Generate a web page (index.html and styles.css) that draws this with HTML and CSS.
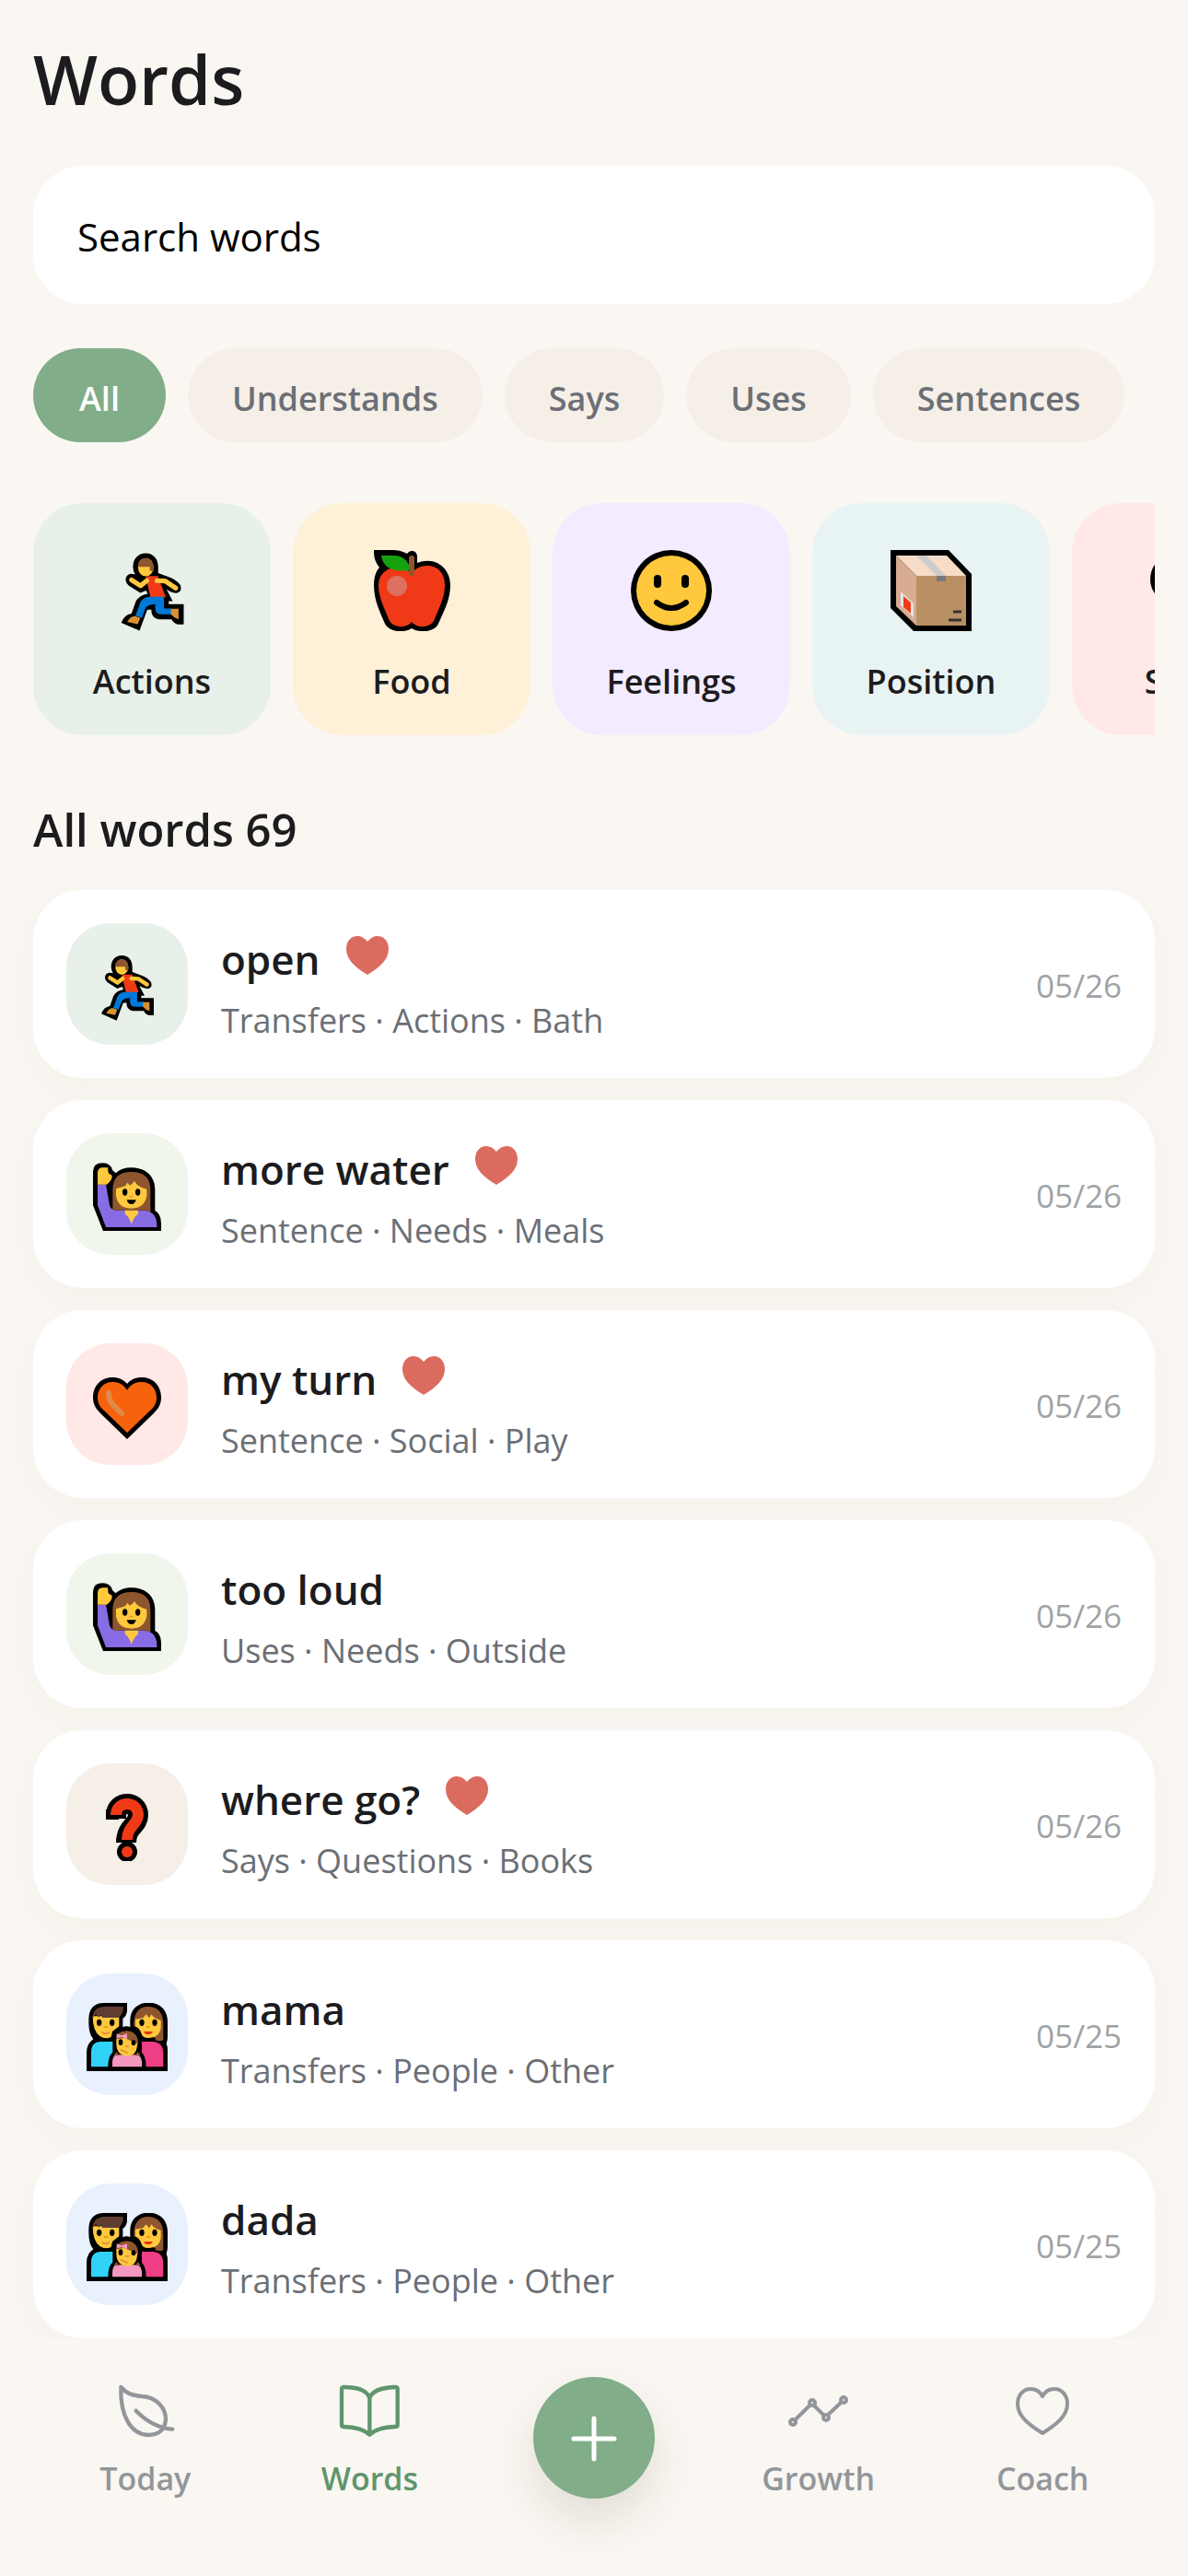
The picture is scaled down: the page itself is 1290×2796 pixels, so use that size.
FILE: index.html
```html
<!DOCTYPE html>
<html lang="en">
<head>
	<meta charset="utf-8">
	<meta name="viewport" content="width=device-width, initial-scale=1">
	<title>Words</title>
	<link rel="stylesheet" href="styles.css">
</head>
<body>
	<!-- shared icons -->
	<svg class="sprite" aria-hidden="true">
		<symbol id="runner" viewBox="123 132 222 222">
			<path d="M217 141C238 141 251 157 251 178V195L275 204Q300 212 312 228Q318 246 302 250Q288 250 274 240L291 272H280V280H321V336H304Q292 332 288 322H252Q232 318 232 295L221 296L200 353L150 331Q158 309 178 306L190 272Q200 256 222 252L218 243L202 249L170 229Q156 214 166 202Q174 194 188 199Q182 190 182 178C182 157 196 141 217 141Z"/>
			<ellipse cx="217" cy="179" rx="21" ry="25" fill="#ffc83d"/>
			<path d="M195 178Q196 154 217 154Q238 155 238 180V190L228 188V178Z" fill="#8e562e"/>
			<path d="M217 206Q220 203 228 203H250L272 261H230Z" fill="#f03a17"/>
			<path d="M178 214L203 230L220 216M248 216L270 217L299 236" fill="none" stroke="#ffc83d" stroke-width="13" stroke-linecap="round" stroke-linejoin="round"/>
			<path d="M228 260H267V292H288V308H258Q243 306 243 290V280Q226 280 217 289L206 318L189 312L202 276Q210 260 228 260Z" fill="#0078d7"/>
			<path d="M166 329Q176 312 188 313L202 318L195 335ZM286 293H307V322Q294 318 286 308Z" fill="#d99030"/>
		</symbol>
		<symbol id="apple" viewBox="0 0 88 88">
			<path d="M3 0H24C32 0 37 3 39 4C42-1 50 0 50 7V14C70 6 86 20 86 38C86 54 79 66 73 80C68 90 52 90 44 85C36 90 21 90 15 80C9 66 3 54 3 38C3 30 5 23 9 19C4 12 3 8 3 0Z"/>
			<path d="M44 25C54 12 80 14 80 38C80 52 73 64 68 77C63 85 49 85 44 78C39 85 25 85 20 77C15 64 8 52 8 38C8 22 26 12 44 25Z" fill="#f03a17"/>
			<path d="M11 6H25C35 6 42 13 42 22C24 24 13 20 11 6Z" fill="#16a10e"/>
			<path d="M44 9V25" stroke="#8e562e" stroke-width="6" stroke-linecap="round"/>
			<circle cx="28" cy="39" r="11" fill="#dd7060"/>
		</symbol>
		<symbol id="smile" viewBox="0 0 88 88">
			<circle cx="44" cy="44" r="44"/>
			<circle cx="44" cy="44" r="38" fill="#ffc83d"/>
			<rect x="25" y="27" width="8" height="14" rx="4"/>
			<rect x="55" y="27" width="8" height="14" rx="4"/>
			<path d="M28 57Q44 69 60 57" fill="none" stroke="#000" stroke-width="6" stroke-linecap="round"/>
		</symbol>
		<symbol id="package" viewBox="0 0 88 88">
			<path d="M0 0H63L88 26V88H25L0 63Z"/>
			<path d="M6 6H61L82 28H28Z" fill="#f7dcc8"/>
			<path d="M6 6L28 28V82L6 61Z" fill="#d8ac92"/>
			<path d="M28 28H82V82H28Z" fill="#b98f64"/>
			<path d="M28 6H39L60 28H50Z" fill="#ccc"/>
			<path d="M50 28H60V34H50Z" fill="#77787c"/>
			<path d="M11 45L25 58V73L11 60Z" fill="#e6e6e6"/>
			<path d="M14 50L22 57V69L14 62Z" fill="#f03a17"/>
			<path d="M68 67H77M63 76H77" stroke="#333" stroke-width="3"/>
		</symbol>
		<symbol id="hand" viewBox="123 126 222 222">
			<path d="M123 155V265L157 351H345V325Q345 292 325 282V215C325 165 290 142 247 142C225 142 207 150 197 160L186 150Q180 127 155 127Q123 127 123 155Z"/>
			<path d="M138 197H165L177 265Q182 281 200 281H290Q331 285 331 330V336H165L138 265Z" fill="#886ce4"/>
			<path d="M138 197V160Q138 142 155 142H171L173 160L185 168Q186 184 168 197Z" fill="#ffc83d"/>
			<path d="M187 278V215Q187 156 248 156Q310 156 310 215V288L295 281H200Q190 281 187 278Z" fill="#8e562e"/>
			<path d="M198 211L228 202L235 191L243 200Q252 195 258 186Q268 206 298 212V235Q290 275 248 275Q205 275 198 235Z" fill="#ffc83d"/>
			<ellipse cx="227" cy="222" rx="8" ry="11"/>
			<ellipse cx="269" cy="222" rx="8" ry="11"/>
			<path d="M243 235Q248 239 253 235" fill="none" stroke="#d99030" stroke-width="4"/>
			<path d="M233 247H263Q260 261 248 261Q236 261 233 247Z"/>
			<path d="M227 281H270L270 293Q258 300 248 326Q240 300 227 293Z" fill="#ffc83d"/>
		</symbol>
		<symbol id="orange-heart" viewBox="0 0 74 74">
			<path d="M37 12C42 6 48 5 53 5C66 5 74 15 74 27C74 34 71 39 66 44L37 72L8 44C3 39 0 34 0 27C0 15 8 5 21 5C26 5 32 6 37 12Z"/>
			<path d="M37 19C42 11 48 10 53 10C63 10 69 18 69 27C69 32 67 37 62 41L37 65L12 41C7 37 5 32 5 27C5 18 11 10 21 10C26 10 32 11 37 19Z" fill="#f7630c"/>
			<path d="M17 22Q17 32 24 37L31 44" fill="none" stroke="#e08a4a" stroke-width="6" stroke-linecap="round"/>
		</symbol>
		<symbol id="question" viewBox="0 0 74 74">
			<path d="M25 28V24C25 8 49 8 49 24C49 36 36 36 36 54" fill="none" stroke="#000" stroke-width="22"/>
			<path d="M14 18H28V29H14Z"/>
			<circle cx="37" cy="64" r="11"/>
			<path d="M25 24C25 8 49 8 49 24C49 34 37 36 37 51" fill="none" stroke="#f03a17" stroke-width="12"/>
			<circle cx="37" cy="64" r="6" fill="#f03a17"/>
		</symbol>
		<symbol id="family" viewBox="108 129 264 222">
			<path d="M240 129V155Q238 172 226 180V208Q238 202 250 208V185C250 150 275 128 310 128C345 128 372 150 372 190V240Q372 250 368 262Q372 270 372 285V351H108V290Q108 262 130 247Q115 230 115 195V180Q117 129 165 129Z"/>
			<path d="M123 337V290Q123 255 155 255H193V290Q178 300 178 337Z" fill="#31d2f7"/>
			<path d="M288 255H325Q358 258 358 295V337H302Q302 305 288 290Z" fill="#ee3e86"/>
			<path d="M128 172H214V205L192 222L188 240Q170 248 152 238Q128 222 128 172Z" fill="#ffc83d"/>
			<path d="M128 178Q128 142 168 141H228Q228 165 212 177H160L155 167L148 176L138 166Z" fill="#603d30"/>
			<path d="M262 205Q260 141 310 141Q358 143 358 200V250Q348 256 332 250V244L290 215Z" fill="#8e562e"/>
			<path d="M267 182L292 178L302 166L312 178L320 166Q325 178 350 186V210Q345 243 308 243Q292 243 287 230Q280 210 267 205Z" fill="#ffc83d"/>
			<path d="M192 337V325Q192 300 207 298H270Q288 300 288 325V337Z" fill="#f498bf"/>
			<path d="M197 300L205 288L215 301ZM265 301L275 288L284 300Z" fill="#8e562e"/>
			<path d="M205 245Q206 221 240 220Q276 224 276 262L270 270H210Z" fill="#8e562e"/>
			<path d="M205 247L232 243Q250 252 273 262Q273 302 240 302Q207 300 205 265Z" fill="#ffc83d"/>
			<path d="M206 229L222 235L240 228V246L222 240L206 244Z" fill="#f498bf"/>
			<g>
				<ellipse cx="149" cy="193" rx="8" ry="11"/>
				<ellipse cx="191" cy="193" rx="8" ry="11"/>
				<ellipse cx="288" cy="193" rx="8" ry="11"/>
				<ellipse cx="330" cy="193" rx="8" ry="11"/>
				<ellipse cx="219" cy="257" rx="7" ry="10"/>
				<ellipse cx="261" cy="259" rx="7" ry="9"/>
			</g>
			<path d="M164 207H178M157 224Q170 234 183 224M303 207H315M234 270H246M218 281L242 292" fill="none" stroke="#d99030" stroke-width="5"/>
			<path d="M294 222H324Q318 232 309 232Q298 232 294 222Z" fill="#e8340f"/>
		</symbol>
		<symbol id="heart" viewBox="0 0 46 42">
			<path d="M23 6C26 2 30 0 34 0C41 0 46 6 46 14C46 26 36 34 23 42C10 34 0 26 0 14C0 6 5 0 12 0C16 0 20 2 23 6Z" fill="currentColor"/>
		</symbol>
	</svg>

	<main class="page">
		<h1 class="title">Words</h1>
		<input class="search" type="text" placeholder="Search words" aria-label="Search words">

		<div class="filters">
			<button class="chip active">All</button>
			<button class="chip">Understands</button>
			<button class="chip">Says</button>
			<button class="chip">Uses</button>
			<button class="chip">Sentences</button>
		</div>

		<div class="categories">
			<button class="category green"><svg class="emoji"><use href="#runner"/></svg><span>Actions</span></button>
			<button class="category yellow"><svg class="emoji"><use href="#apple"/></svg><span>Food</span></button>
			<button class="category purple"><svg class="emoji"><use href="#smile"/></svg><span>Feelings</span></button>
			<button class="category teal"><svg class="emoji"><use href="#package"/></svg><span>Position</span></button>
			<button class="category pink"><svg class="emoji"><use href="#orange-heart"/></svg><span>Social</span></button>
		</div>

		<h2 class="subtitle">All words 69</h2>

		<ul class="words">
			<li class="word">
				<div class="tile green"><svg><use href="#runner"/></svg></div>
				<div class="info">
					<h3>open <svg class="fav"><use href="#heart"/></svg></h3>
					<p>Transfers · Actions · Bath</p>
				</div>
				<time>05/26</time>
			</li>
			<li class="word">
				<div class="tile lime"><svg><use href="#hand"/></svg></div>
				<div class="info">
					<h3>more water <svg class="fav"><use href="#heart"/></svg></h3>
					<p>Sentence · Needs · Meals</p>
				</div>
				<time>05/26</time>
			</li>
			<li class="word">
				<div class="tile pink"><svg><use href="#orange-heart"/></svg></div>
				<div class="info">
					<h3>my turn <svg class="fav"><use href="#heart"/></svg></h3>
					<p>Sentence · Social · Play</p>
				</div>
				<time>05/26</time>
			</li>
			<li class="word">
				<div class="tile lime"><svg><use href="#hand"/></svg></div>
				<div class="info">
					<h3>too loud</h3>
					<p>Uses · Needs · Outside</p>
				</div>
				<time>05/26</time>
			</li>
			<li class="word">
				<div class="tile sand"><svg><use href="#question"/></svg></div>
				<div class="info">
					<h3>where go? <svg class="fav"><use href="#heart"/></svg></h3>
					<p>Says · Questions · Books</p>
				</div>
				<time>05/26</time>
			</li>
			<li class="word">
				<div class="tile blue"><svg class="wide"><use href="#family"/></svg></div>
				<div class="info">
					<h3>mama</h3>
					<p>Transfers · People · Other</p>
				</div>
				<time>05/25</time>
			</li>
			<li class="word">
				<div class="tile blue"><svg class="wide"><use href="#family"/></svg></div>
				<div class="info">
					<h3>dada</h3>
					<p>Transfers · People · Other</p>
				</div>
				<time>05/25</time>
			</li>
		</ul>
	</main>

	<nav class="tabs">
		<a class="tab" href="#today">
			<svg viewBox="42 42 198 198" stroke-width="13">
				<path d="M61 63C82 88 105 90 130 93C175 95 207 130 207 168C204 205 180 219 150 219C95 217 58 160 61 63ZM110 140Q165 195 229 200"/>
			</svg>
			Today
		</a>
		<a class="tab current" href="#words">
			<svg viewBox="774 42 198 198" stroke-width="13">
				<path d="M874 98C865 72 835 63 790 63Q783 63 783 70V185Q783 192 790 192C830 193 855 200 874 218C892 200 925 193 958 192Q965 192 965 185V70Q965 63 958 63C915 64 882 76 874 98V218"/>
			</svg>
			Words
		</a>
		<button class="add" aria-label="Add word">
			<svg viewBox="0 0 54 54"><path d="M27 6V50M5 28H49"/></svg>
		</button>
		<a class="tab" href="#growth">
			<svg viewBox="0 0 66 66" stroke-width="4">
				<path d="M8 42L23 27M28 27L38 37M43 37L57 24"/>
				<circle cx="5" cy="45" r="3"/>
				<circle cx="26" cy="24" r="3"/>
				<circle cx="41" cy="40" r="3"/>
				<circle cx="60" cy="21" r="3"/>
			</svg>
			Growth
		</a>
		<a class="tab" href="#coach">
			<svg viewBox="0 0 66 66" stroke-width="4">
				<path d="M33 17C36 11 41 9 46 9C54 9 60 16 60 25C60 38 49 47 33 57C17 47 6 38 6 25C6 16 12 9 20 9C25 9 30 11 33 17Z"/>
			</svg>
			Coach
		</a>
	</nav>
</body>
</html>
```
FILE: styles.css
```css
* {
	box-sizing: border-box;
}

body {
	margin: 0;
	min-height: 100vh;
	display: flex;
	flex-direction: column;
	background: #faf7f2;
	color: #1c1c1e;
	font-family: "Open Sans", "Noto Sans", sans-serif;
}

button, input {
	font: inherit;
	color: inherit;
	border: none;
	margin: 0;
}

svg {
	display: block;
	flex-shrink: 0;
}

.sprite {
	position: absolute;
	width: 0;
	height: 0;
}

.page {
	padding: 36px 36px 0;
	overflow: hidden;
}

.title {
	margin: 0 0 44px;
	font-size: 74px;
	line-height: 100px;
	font-weight: 600;
}

.search {
	display: block;
	width: 100%;
	height: 150px;
	padding: 2px 48px 0;
	border-radius: 54px;
	background: #fff;
	font-size: 42px;
}

.search::placeholder {
	color: #000;
	opacity: 1;
}

.filters {
	display: flex;
	gap: 24px;
	margin-top: 48px;
}

.chip {
	min-width: 144px;
	height: 102px;
	padding: 6px 48px 0;
	border-radius: 51px;
	background: #f6efe8;
	color: #6b6f76;
	font-size: 36px;
	font-weight: 600;
	white-space: nowrap;
}

.chip.active {
	background: #81ad89;
	color: #fff;
}

.categories {
	display: flex;
	gap: 24px;
	margin-top: 66px;
	overflow: hidden;
}

.category {
	flex: 0 0 258px;
	height: 252px;
	padding: 18px 0 0;
	border-radius: 54px;
	display: flex;
	flex-direction: column;
	align-items: center;
	justify-content: center;
	gap: 30px;
	font-size: 36px;
	font-weight: 600;
}

.category span {
	line-height: 50px;
}

.emoji {
	width: 88px;
	height: 88px;
}

.green { background: #e8f1e9; }
.yellow { background: #fff0d8; }
.purple { background: #f3ebff; }
.teal { background: #e8f4f4; }
.pink { background: #ffe8e6; }
.lime { background: #f0f6eb; }
.sand { background: #f5efe8; }
.blue { background: #e9f1ff; }

.subtitle {
	margin: 66px 0 30px;
	font-size: 49px;
	line-height: 72px;
	font-weight: 600;
}

.words {
	list-style: none;
	margin: 0;
	padding: 0;
	display: flex;
	flex-direction: column;
	gap: 24px;
}

.word {
	display: flex;
	align-items: center;
	gap: 36px;
	height: 204px;
	padding: 0 36px;
	border-radius: 54px;
	background: #fff;
	box-shadow: 0 12px 36px rgba(90, 60, 30, 0.03);
}

.tile {
	width: 132px;
	height: 132px;
	padding-top: 6px;
	border-radius: 48px;
	display: flex;
	align-items: center;
	justify-content: center;
}

.tile svg {
	width: 74px;
	height: 74px;
}

.tile .wide {
	width: 88px;
}

.info {
	flex: 1;
	padding-top: 10px;
}

.info h3 {
	display: flex;
	align-items: baseline;
	gap: 28px;
	margin: 0 0 4px;
	font-size: 44px;
	line-height: 66px;
	font-weight: 600;
}

.info p {
	margin: 0;
	font-size: 36px;
	line-height: 60px;
	color: #6b6f76;
}

.fav {
	width: 46px;
	height: 42px;
	color: #db6b5f;
}

.word time {
	padding-top: 2px;
	font-size: 35px;
	color: #9fa3a5;
}

.tabs {
	display: grid;
	grid-template-columns: repeat(5, 1fr);
	margin-top: auto;
	height: 258px;
	padding: 42px 36px 0;
}

.tab {
	display: flex;
	flex-direction: column;
	align-items: center;
	gap: 16px;
	padding-top: 4px;
	color: #92969b;
	font-size: 34px;
	line-height: 48px;
	font-weight: 600;
	text-decoration: none;
}

.tab.current {
	color: #5f956d;
}

.tab svg {
	width: 66px;
	height: 66px;
	fill: none;
	stroke: currentColor;
	stroke-linecap: round;
	stroke-linejoin: round;
}

.add {
	width: 132px;
	height: 132px;
	padding: 0;
	justify-self: center;
	display: flex;
	align-items: center;
	justify-content: center;
	border-radius: 50%;
	background: #81ad89;
	box-shadow: 0 24px 48px rgba(60, 40, 20, 0.12);
}

.add svg {
	width: 54px;
	height: 54px;
	fill: none;
	stroke: #fff;
	stroke-width: 5;
	stroke-linecap: round;
}
```
